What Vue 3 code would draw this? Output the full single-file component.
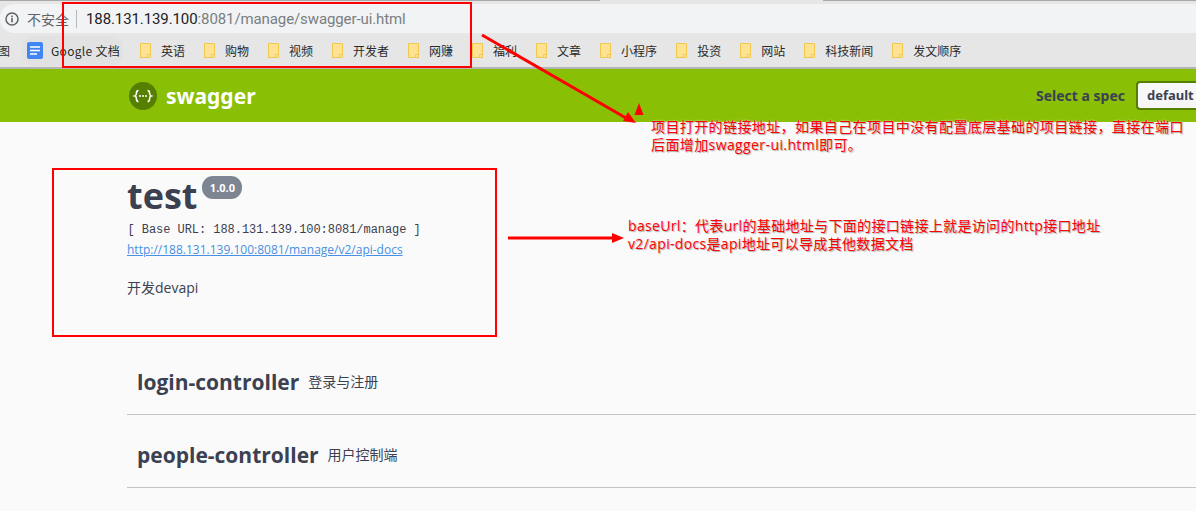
<script setup>
const bookmarks = ['英语', '购物', '视频', '开发者', '网赚', '福利', '文章', '小程序', '投资', '网站', '科技新闻', '发文顺序']

const tags = [
  { name: 'login-controller', desc: '登录与注册' },
  { name: 'people-controller', desc: '用户控制端' },
  { name: 'article-controller', desc: '' }
]
</script>

<template>
  <div class="page">
    <header class="chrome">
      <div class="tab-line"></div>
      <div class="omnibox">
        <svg class="info" width="14" height="14" viewBox="0 0 14 14">
          <circle cx="7" cy="7" r="6" fill="none" stroke="#5f6368" stroke-width="1.5" />
          <rect x="6.2" y="6" width="1.6" height="4.4" fill="#5f6368" />
          <rect x="6.2" y="3.6" width="1.6" height="1.6" fill="#5f6368" />
        </svg>
        <span class="insecure">不安全</span>
        <span class="sep"></span>
        <span class="url"><b>188.131.139.100</b>:8081/manage/swagger-ui.html</span>
      </div>
      <nav class="bookmarks">
        <span class="cut">图</span>
        <span class="docs">
          <svg width="16" height="17" viewBox="0 0 16 17">
            <rect width="16" height="17" rx="2" fill="#4285f4" />
            <path d="M3 5h10M3 8.500h10M3 12h7" stroke="#fff" stroke-width="1.600" />
          </svg>
          <span class="docs-name">Google 文档</span>
        </span>
        <span v-for="b in bookmarks" :key="b" class="mark">
          <svg width="11" height="15" viewBox="0 0 11 15">
            <path d="M.5.5h10v14H.5z" fill="#fde293" stroke="#f2c84f" />
            <path d="M7.500 14.500v-3h3" fill="none" stroke="#f2c84f" />
          </svg>
          <span>{{ b }}</span>
        </span>
      </nav>
    </header>

    <div class="topbar">
      <div class="brand">
        <svg width="28" height="28" viewBox="0 0 28 28">
          <circle cx="14" cy="14" r="14" fill="#547f00" />
          <path d="M9.500 8.500c-2 0-2 1-2 2.300s0 2.700-1.600 3.200c1.600.5 1.600 1.900 1.600 3.200s0 2.300 2 2.300M18.500 8.500c2 0 2 1 2 2.300s0 2.700 1.600 3.200c-1.600.5-1.600 1.900-1.600 3.200s0 2.300-2 2.300" fill="none" stroke="#fff" stroke-width="1.600" />
          <circle cx="11" cy="14" r="1" fill="#fff" />
          <circle cx="14" cy="14" r="1" fill="#fff" />
          <circle cx="17" cy="14" r="1" fill="#fff" />
        </svg>
        <span class="brand-name">swagger</span>
      </div>
      <div class="spec">
        <span class="spec-label">Select a spec</span>
        <span class="spec-select">default</span>
      </div>
    </div>

    <main class="content">
      <section class="info-block">
        <div class="title-row">
          <h1>test</h1>
          <span class="version">1.0.0</span>
        </div>
        <p class="base">[ Base URL: 188.131.139.100:8081/manage ]</p>
        <a class="docs-link">http://188.131.139.100:8081/manage/v2/api-docs</a>
        <p class="desc">开发devapi</p>
      </section>
      <section class="tags">
        <div v-for="t in tags" :key="t.name" class="tag">
          <h2>{{ t.name }}</h2>
          <small>{{ t.desc }}</small>
        </div>
      </section>
    </main>

    <svg class="marks" width="1196" height="511" viewBox="0 0 1196 511">
      <rect x="63" y="3" width="408" height="64" fill="none" stroke="#f00" stroke-width="2" />
      <rect x="53" y="169" width="443" height="167" fill="none" stroke="#f00" stroke-width="2" />
      <path d="M482 35L626 118" stroke="#f00" stroke-width="3" />
      <path d="M636 123L623 121L628 112z" fill="#f00" />
      <path d="M639 103L643.500 115H634.500z" fill="#f00" />
      <path d="M508 238H612" stroke="#f00" stroke-width="3" />
      <path d="M624 238L612 233V243z" fill="#f00" />
    </svg>

    <p class="note note-a">项目打开的链接地址，如果自己在项目中没有配置底层基础的项目链接，直接在端口<br />后面增加swagger-ui.html即可。</p>
    <p class="note note-b">baseUrl：代表url的基础地址与下面的接口链接上就是访问的http接口地址<br />v2/api-docs是api地址可以导成其他数据文档</p>
  </div>
</template>

<style scoped>
.page {
  position: relative;
  width: 1196px;
  height: 511px;
  overflow: hidden;
  background: #fafafa;
  color: #3b4151;
  font-family: "Open Sans", "Noto Sans CJK SC", sans-serif;
}

.chrome {
  height: 69px;
  box-sizing: border-box;
  background: #e6e6e6;
  border-bottom: 2px solid #b4b4b4;
}
.tab-line {
  height: 1px;
  margin-bottom: 3px;
  background: linear-gradient(90deg, #a8a8a8 0 600px, #e6e6e6 600px 823px, #a8a8a8 823px);
}
.omnibox {
  display: flex;
  align-items: center;
  height: 29px;
  padding-left: 5px;
  background: #f1f3f4;
  border-radius: 14px 0 0 14px;
}
.insecure {
  margin-left: 8px;
  font: 14px "Noto Sans CJK SC", sans-serif;
  color: #5f6368;
}
.sep {
  width: 1px;
  height: 18px;
  margin: 0 9px 0 7px;
  background: #b5b8bb;
}
.url {
  font: 15px Roboto, sans-serif;
  letter-spacing: -.1px;
  color: #7a7e82;
}
.url b {
  font-weight: 400;
  color: #202124;
}
.bookmarks {
  display: flex;
  align-items: center;
  height: 35px;
  font: 12px "Noto Sans CJK SC", sans-serif;
  color: #2a2a2a;
}
.cut {
  width: 24px;
  margin-left: -2px;
}
.docs {
  display: flex;
  align-items: center;
  gap: 8px;
  width: 101px;
  height: 30px;
  box-sizing: border-box;
  padding-left: 5px;
  margin-right: 17px;
  background: #e2e2e2;
  border-radius: 12px;
}
.docs-name {
  letter-spacing: .3px;
  white-space: nowrap;
}
.mark {
  display: flex;
  align-items: center;
  gap: 10px;
  margin-right: 19px;
}

.topbar {
  display: flex;
  align-items: center;
  justify-content: space-between;
  height: 53px;
  padding-left: 129px;
  background: #89bf04;
}
.brand {
  display: flex;
  align-items: center;
  gap: 9px;
}
.brand-name {
  font: 700 21px "Noto Sans", sans-serif;
  color: #fff;
}
.spec {
  display: flex;
  align-items: center;
  gap: 11px;
  font: 700 14px "Noto Sans", sans-serif;
}
.spec-select {
  width: 60px;
  height: 29px;
  box-sizing: border-box;
  padding-left: 9px;
  font-size: 13px;
  line-height: 25px;
  background: #f7f7f7;
  border: 2px solid #547f00;
  border-right: 0;
  border-radius: 4px 0 0 4px;
}

.content {
  padding: 50px 0 0 127px;
}
.title-row {
  display: flex;
  align-items: flex-start;
  gap: 5px;
  height: 48px;
}
h1 {
  margin: 0;
  font-size: 36px;
  line-height: 48px;
  font-weight: 700;
}
.version {
  margin-top: 4px;
  width: 40px;
  height: 23px;
  line-height: 23px;
  text-align: center;
  font-size: 11px;
  font-weight: 700;
  color: #fff;
  background: #7d8492;
  border-radius: 11px;
}
.base {
  margin: 2px 0 0 0.5px;
  font: 12px/16px "Liberation Mono", monospace;
  letter-spacing: -.05px;
}
.docs-link {
  display: block;
  margin-top: 4px;
  font-size: 12px;
  line-height: 16px;
  color: #4990e2;
  text-decoration: underline;
}
.desc {
  margin: 20px 0 0;
  font-size: 14px;
  line-height: 19px;
}
.tags {
  margin-top: 45px;
}
.tag {
  display: flex;
  align-items: center;
  gap: 10px;
  padding: 8px 0 0 10px;
  box-sizing: border-box;
  height: 73px;
  border-bottom: 1px solid #c4c5c9;
}
.tag:last-child {
  height: 62px;
  padding-top: 0;
}
h2 {
  margin: 0;
  font-size: 21px;
  font-weight: 700;
}
small {
  font-size: 14px;
  margin-left: -1px;
  margin-top: -2px;
}

.marks {
  position: absolute;
  left: 0;
  top: 0;
  pointer-events: none;
}
.note {
  position: absolute;
  margin: 0;
  font: 14px/18px "Open Sans", "Noto Sans CJK SC", sans-serif;
  color: #f00;
  white-space: nowrap;
  text-shadow: 1px 1px 1px #aaa, 0 0 2px #fff;
}
.note-a {
  left: 651px;
  top: 118px;
  letter-spacing: .4px;
}
.note-b {
  left: 628px;
  top: 217px;
  letter-spacing: .33px;
}
</style>

<style>
html, body {
  overflow: hidden;
}
</style>
